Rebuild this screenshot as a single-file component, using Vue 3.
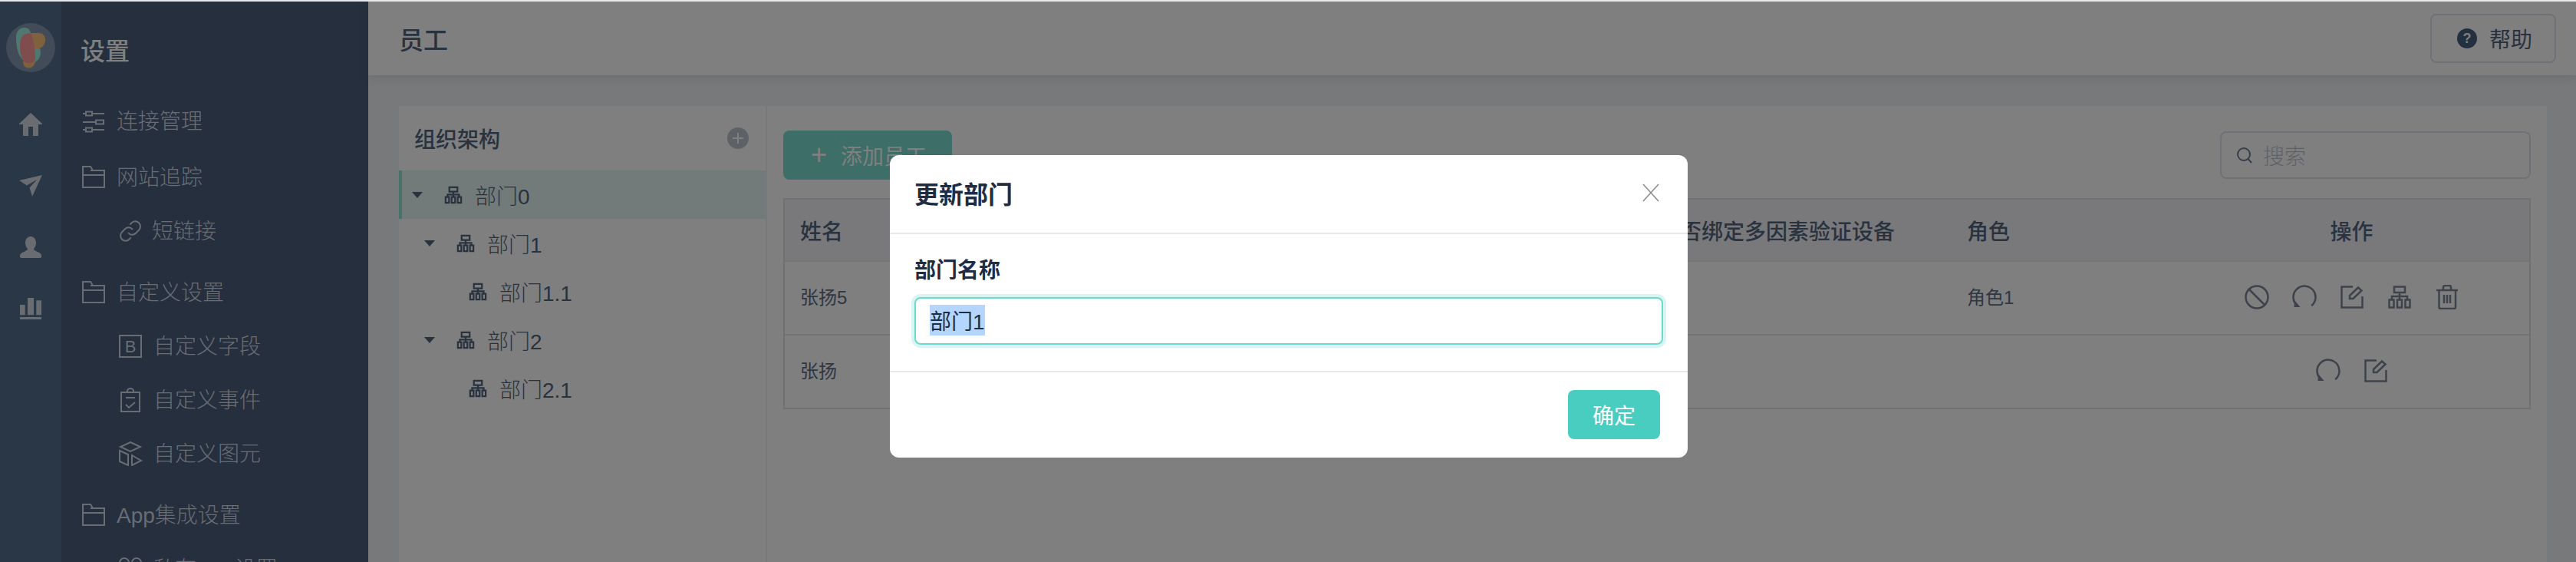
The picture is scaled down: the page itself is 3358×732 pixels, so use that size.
<script setup>
import { ref, onMounted } from "vue";

const nameInput = ref(null);

const icons = {
  sliders: ["M2 6H6M14 6H30M6 3.5h8v5H6z", "M2 17H19M29 17H30M19 14.5h10v5H19z", "M2 27H6M14 27H30M6 24.5h8v5H6z"],
  folder: ["M2 2H12L15 7H30V29H2Z", "M2 13H30M12 7H15"],
  link: ["M13 18a6.5 6.5 0 0 0 10 .7l4-4a6.6 6.6 0 0 0-9.4-9.4l-2.3 2.3", "M19 14a6.5 6.5 0 0 0-10-.7l-4 4a6.6 6.6 0 0 0 9.4 9.4l2.3-2.3"],
  box: ["M2 2H30V30H2Z"],
  clipboard: ["M4 6H28V31H4Z", "M12 6V4a4 3 0 0 1 8 0V6", "M10 13H22M10 22l4 4 8-7"],
  shape: ["M16 1L29 7 16 13 3 7Z", "M2 12L13 17V31L2 26Z", "M18 18L30 25 18 31Z"],
  rings: ["M14 8a6 6 0 1 1-12 0a6 6 0 1 1 12 0", "M30 8a6 6 0 1 1-12 0a6 6 0 1 1 12 0"],
  ban: ["M30.5 16a14.5 14.5 0 1 1-29 0a14.5 14.5 0 1 1 29 0", "M6 6L26 26"],
  redo: ["M25.2 27.3A14.5 14.5 0 1 0 5 25.5"],
  edit: ["M17 2.5H2.5V29.5H29.5V15", "M13 18V14L24 3.5L28.5 7.5L17.5 18Z"],
  org: ["M9 2.5H23V10H9Z", "M16 10V15M6 19V15H26V19M16 15V19", "M2.5 19.5H8.5V29.5H2.5Z", "M13 19.5H19V29.5H13Z", "M23.5 19.5H29.5V29.5H23.5Z"],
  trash: ["M2 7H30M11 7V3a2 2 0 0 1 2-2h6a2 2 0 0 1 2 2V7", "M5.5 7V29a2 2 0 0 0 2 2H25a2 2 0 0 0 2-2V7", "M12 13V24M16 13V24M20 13V24"],
};

const railIcons = [
  "M16 1L31 15V16H26V30Q26 31 25 31H19V19H13V31H7Q6 31 6 30V16H1V15Z",
  "M1 9L31 2 18 30 14.5 18.5 24 8 11 15.5Z",
  "M16 2C20.5 2 23 6 23 10.5C23 14 21.5 16.5 20 18C20 20 23 21 27 23C29.5 24.200 30 26 30 28C30 29.500 29 30 28 30H4C3 30 2 29.500 2 28C2 26 2.500 24.200 5 23C9 21 12 20 12 18C10.500 16.500 9 14 9 10.500C9 6 11.500 2 16 2Z",
  "M2 11H8.700V24.300H2ZM12 2H20V24.300H12ZM23.300 5.300H30V24.300H23.300ZM2 27H30V30H2Z",
];

const menu = [
  { label: "连接管理", icon: "sliders", sub: false, gap: "" },
  { label: "网站追踪", icon: "folder", sub: false, gap: "small" },
  { label: "短链接", icon: "link", sub: true, gap: "", tight: true },
  { label: "自定义设置", icon: "folder", sub: false, gap: "large" },
  { label: "自定义字段", icon: "box", sub: true, gap: "", letter: "B" },
  { label: "自定义事件", icon: "clipboard", sub: true, gap: "" },
  { label: "自定义图元", icon: "shape", sub: true, gap: "" },
  { label: "App集成设置", icon: "folder", sub: false, gap: "large" },
  { label: "私有App设置", icon: "rings", sub: true, gap: "" },
];

const tree = [
  { label: "部门0", level: 0, caret: true, active: true },
  { label: "部门1", level: 1, caret: true },
  { label: "部门1.1", level: 2, caret: false },
  { label: "部门2", level: 1, caret: true },
  { label: "部门2.1", level: 2, caret: false },
];

const rows = [
  { name: "张扬5", role: "角色1", actions: ["ban", "redo", "edit", "org", "trash"] },
  { name: "张扬", role: "", actions: ["redo", "edit"] },
];

onMounted(() => {
  nameInput.value.focus();
  nameInput.value.select();
});
</script>

<template>
  <div class="screen">
    <div class="app">
      <aside class="rail">
        <div class="logo">
          <svg viewBox="0 0 64 64" width="64" height="64">
            <path class="logo-teal" d="M13 18C13 10 18 6 24 6C30 6 32 10 33 18C34 24 44 26 45 38C45 46 40 52 32 52C20 52 13 40 13 18Z" />
            <path class="logo-orange" d="M32 13H43C48 13 51 17 51 22C51 28 47 33 42 33H32Z" />
            <path class="logo-orange" d="M22 50H38C38 55 33 58.500 29 58.500C25 58.500 22 55 22 50Z" />
            <path class="logo-red" d="M18 28C18 18 23 13 32 13C34 18 38 30 38 46C38 50 36 52 28 52C23 52 18 46 18 28Z" />
          </svg>
        </div>
        <svg v-for="d in railIcons" :key="d" class="rail-icon" viewBox="0 0 32 32" width="32" height="32">
          <path :d="d" />
        </svg>
      </aside>

      <nav class="sidebar">
        <h2>设置</h2>
        <div class="menu">
          <div
            v-for="item in menu"
            :key="item.label"
            class="menu-item"
            :class="[item.gap, { sub: item.sub, tight: item.tight }]"
          >
            <svg class="line-icon" viewBox="0 0 32 32" width="32" height="32">
              <path v-for="d in icons[item.icon]" :key="d" :d="d" />
              <text v-if="item.letter" x="16" y="24" text-anchor="middle" class="icon-letter">{{ item.letter }}</text>
            </svg>
            <span>{{ item.label }}</span>
          </div>
        </div>
      </nav>

      <main class="main">
        <header class="topbar">
          <h1>员工</h1>
          <button type="button" class="help">
            <span class="help-dot">?</span>
            帮助
          </button>
        </header>

        <div class="content">
          <section class="panel">
            <div class="tree">
              <div class="tree-head">
                <strong>组织架构</strong>
                <span class="add-dot">
                  <svg viewBox="0 0 28 28" width="28" height="28"><path d="M14 7V21M7 14H21" /></svg>
                </span>
              </div>
              <div
                v-for="node in tree"
                :key="node.label"
                class="tree-row"
                :class="['level' + node.level, { active: node.active }]"
              >
                <span class="caret" :class="{ hidden: !node.caret }"></span>
                <svg class="tree-icon" viewBox="0 0 32 32" width="24" height="24">
                  <path v-for="d in icons.org" :key="d" :d="d" />
                </svg>
                <span>{{ node.label }}</span>
              </div>
            </div>

            <div class="staff">
              <div class="toolbar">
                <button type="button" class="add-btn"><span class="plus">+</span>添加员工</button>
                <div class="search">
                  <svg viewBox="0 0 24 24" width="24" height="24"><path d="M19 11a8 8 0 1 1-16 0a8 8 0 1 1 16 0M16.500 17L21 22" /></svg>
                  <span>搜索</span>
                </div>
              </div>

              <div class="table">
                <div class="tr th">
                  <div>姓名</div>
                  <div>是否绑定多因素验证设备</div>
                  <div>角色</div>
                  <div class="center">操作</div>
                </div>
                <div v-for="row in rows" :key="row.name" class="tr">
                  <div class="cell">{{ row.name }}</div>
                  <div></div>
                  <div class="cell">{{ row.role }}</div>
                  <div class="actions">
                    <svg v-for="a in row.actions" :key="a" viewBox="0 0 32 32" width="32" height="32">
                      <path v-for="d in icons[a]" :key="d" :d="d" />
                      <path v-if="a === 'redo'" class="solid" d="M3 20L10.500 29H2.500Z" />
                    </svg>
                  </div>
                </div>
              </div>
            </div>
          </section>
        </div>
      </main>

      <div class="mask">
        <div class="modal">
          <div class="modal-head">
            <span>更新部门</span>
            <svg viewBox="0 0 24 24" width="24" height="24"><path d="M2 1L22 23M22 1L2 23" /></svg>
          </div>
          <div class="modal-body">
            <label for="dept-name">部门名称</label>
            <input id="dept-name" ref="nameInput" type="text" value="部门1" />
          </div>
          <div class="modal-foot">
            <button type="button">确定</button>
          </div>
        </div>
      </div>
    </div>
  </div>
</template>

<style>
html,
body {
  overflow: hidden;
}
</style>

<style scoped>
.screen {
  height: 732px;
  padding-top: 2px;
  box-sizing: border-box;
  background: #e8e8ec;
  overflow: hidden;
  font-family: "Liberation Sans", "Noto Sans CJK SC", sans-serif;
  color: #5a6c86;
}

.app {
  position: relative;
  display: flex;
  height: 730px;
  overflow: hidden;
}

.rail {
  width: 80px;
  flex: none;
  background: #536e8c;
  display: flex;
  flex-direction: column;
  align-items: center;
  padding-top: 28px;
  box-sizing: border-box;
}

.logo {
  width: 64px;
  height: 64px;
  border-radius: 50%;
  background: #8496b0;
  margin-bottom: 52px;
}

.logo svg {
  display: block;
}

.logo-teal {
  fill: #9ef0e0;
}

.logo-orange {
  fill: #ffc27a;
}

.logo-red {
  fill: #ff9a9a;
}

.rail-icon {
  flex: none;
  margin-bottom: 48px;
  fill: #d2d8e2;
}

.sidebar {
  width: 400px;
  flex: none;
  background: #4b5e7a;
  color: #d0d8e6;
}

.sidebar h2 {
  margin: 0;
  padding: 44px 0 0 25px;
  font-size: 32px;
  line-height: 42px;
  font-weight: 500;
  color: #fff;
}

.menu {
  margin-top: 33px;
}

.menu-item {
  height: 70px;
  display: flex;
  align-items: center;
  padding-left: 26px;
  font-size: 28px;
  font-weight: 300;
}

.menu-item.sub {
  padding-left: 74px;
}

.menu-item.small {
  margin-top: 3px;
}

.menu-item.large {
  margin-top: 10px;
}

.menu-item span {
  margin-left: 14px;
}

.menu-item.sub span {
  margin-left: 14px;
}

.menu-item.tight span {
  margin-left: 12px;
}

.line-icon {
  flex: none;
  margin-top: 4px;
  fill: none;
  stroke: #d0d8e6;
  stroke-width: 2;
}

.icon-letter {
  font-size: 22px;
  fill: #d0d8e6;
  stroke: none;
  font-family: "Liberation Sans", sans-serif;
}

.main {
  flex: 1;
  min-width: 0;
  display: flex;
  flex-direction: column;
  background: #f1f2f5;
}

.topbar {
  height: 96px;
  flex: none;
  background: #fff;
  box-shadow: 0 4px 12px rgba(60, 70, 90, 0.12);
  display: flex;
  align-items: center;
  justify-content: space-between;
  padding: 0 26px 0 40px;
}

.topbar h1 {
  margin: 0;
  font-size: 32px;
  font-weight: 500;
  color: #53647e;
}

.help {
  width: 164px;
  height: 64px;
  display: flex;
  align-items: center;
  padding-left: 33px;
  gap: 16px;
  box-sizing: border-box;
  background: #fff;
  border: 2px solid #dde2ea;
  border-radius: 8px;
  font: inherit;
  font-size: 28px;
  color: #53647e;
}

.help-dot {
  width: 26px;
  height: 26px;
  border-radius: 50%;
  background: #46607f;
  color: #fff;
  font-size: 18px;
  font-weight: 700;
  line-height: 26px;
  text-align: center;
}

.content {
  flex: 1;
  min-height: 0;
  padding: 40px 38px 0 40px;
}

.panel {
  height: 100%;
  display: flex;
  background: #fff;
}

.tree {
  width: 478px;
  flex: none;
  border-right: 2px solid #f0f2f5;
}

.tree-head {
  height: 84px;
  display: flex;
  align-items: center;
  justify-content: space-between;
  padding: 0 22px 0 20px;
  font-size: 28px;
  color: #53647e;
}

.tree-head strong {
  font-weight: 500;
}

.add-dot {
  width: 28px;
  height: 28px;
  border-radius: 50%;
  background: #bcc5cf;
}

.add-dot svg {
  display: block;
  fill: none;
  stroke: #fff;
  stroke-width: 2;
}

.tree-row {
  height: 63px;
  display: flex;
  align-items: center;
  box-sizing: border-box;
  font-size: 28px;
  font-weight: 300;
  color: #53647e;
}

.tree-row.active {
  background: #e5f7f3;
  border-left: 4px solid #8de5d8;
}

.level0 {
  padding-left: 17px;
}

.level0.active {
  padding-left: 13px;
}

.level1 {
  padding-left: 33px;
}

.level2 {
  padding-left: 49px;
}

.caret {
  width: 0;
  height: 0;
  margin-right: 28px;
  border-left: 7px solid transparent;
  border-right: 7px solid transparent;
  border-top: 8px solid #53647e;
}

.caret.hidden {
  border-top-color: transparent;
}

.tree-icon {
  flex: none;
  margin-right: 16px;
  fill: none;
  stroke: #53647e;
  stroke-width: 3;
}

.staff {
  flex: 1;
  min-width: 0;
  padding: 32px 21px 0;
}

.toolbar {
  height: 64px;
  display: flex;
  align-items: center;
  justify-content: space-between;
  margin-bottom: 24px;
}

.add-btn {
  width: 220px;
  height: 64px;
  display: flex;
  align-items: center;
  padding-left: 36px;
  box-sizing: border-box;
  border: none;
  border-radius: 8px;
  background: #7adcd0;
  font: inherit;
  font-size: 28px;
  color: #fff;
}

.plus {
  font-size: 36px;
  font-weight: 300;
  margin-right: 18px;
}

.search {
  width: 405px;
  height: 62px;
  display: flex;
  align-items: center;
  gap: 12px;
  padding-left: 18px;
  box-sizing: border-box;
  border: 2px solid #dde2ea;
  border-radius: 8px;
  font-size: 28px;
  font-weight: 300;
  color: #bfc6d0;
}

.search svg {
  fill: none;
  stroke: #6c7c92;
  stroke-width: 2;
}

.table {
  border: 2px solid #e2e3e6;
  font-size: 24px;
  color: #5e6e87;
}

.tr {
  display: grid;
  grid-template-columns: 1119px 402px 290px 1fr;
  height: 96px;
  align-items: center;
  border-top: 2px solid #e8e9eb;
  box-sizing: border-box;
}

.tr > div {
  padding-left: 20px;
}

.tr > .cell {
  margin-top: -6px;
}

.tr.th {
  height: 79px;
  border-top: none;
  background: #f2f3f6;
  font-size: 28px;
  font-weight: 500;
  color: #53647e;
}

.tr > .center {
  padding-left: 0;
  text-align: center;
}

.tr > .actions {
  padding-left: 0;
  margin-top: -2px;
  display: flex;
  justify-content: center;
  gap: 30px;
}

.actions svg {
  fill: none;
  stroke: #7d8496;
  stroke-width: 2.5;
}

.actions .solid {
  fill: #7d8496;
  stroke: none;
}

.mask {
  position: absolute;
  inset: 0;
  background: rgba(0, 0, 0, 0.5);
  display: flex;
  justify-content: center;
  align-items: flex-start;
  padding: 200px 0 0 2px;
  box-sizing: border-box;
}

.modal {
  width: 1040px;
  height: 394px;
  background: #fff;
  border-radius: 12px;
  color: #1f2d44;
  display: flex;
  flex-direction: column;
}

.modal-head {
  height: 103px;
  flex: none;
  box-sizing: border-box;
  border-bottom: 2px solid #e8e8e8;
  display: flex;
  align-items: center;
  justify-content: space-between;
  padding: 0 36px 4px 32px;
  font-size: 32px;
  font-weight: 700;
}

.modal-head svg {
  margin-top: 0;
  fill: none;
  stroke: #8a8a8a;
  stroke-width: 1.5;
}

.modal-body {
  flex: 1;
  padding: 28px 32px 0;
}

.modal-body label {
  display: block;
  font-size: 28px;
  line-height: 40px;
  font-weight: 700;
  margin-bottom: 14px;
}

.modal-body input {
  display: block;
  width: 100%;
  height: 62px;
  box-sizing: border-box;
  padding: 0 18px 2px;
  border: 2px solid #6dd8cc;
  border-radius: 8px;
  outline: none;
  box-shadow: 0 0 0 4px #d9f5f1;
  font: inherit;
  font-size: 28px;
  color: #1f2d44;
}

.modal-body input::selection {
  background: #b4d5fe;
  color: #1f2d44;
}

.modal-foot {
  height: 113px;
  flex: none;
  box-sizing: border-box;
  border-top: 2px solid #e8e8e8;
  display: flex;
  justify-content: flex-end;
  padding: 23px 36px 0 0;
}

.modal-foot button {
  width: 120px;
  height: 64px;
  border: none;
  border-radius: 8px;
  background: #49cdc0;
  color: #fff;
  font: inherit;
  font-size: 28px;
}
</style>
